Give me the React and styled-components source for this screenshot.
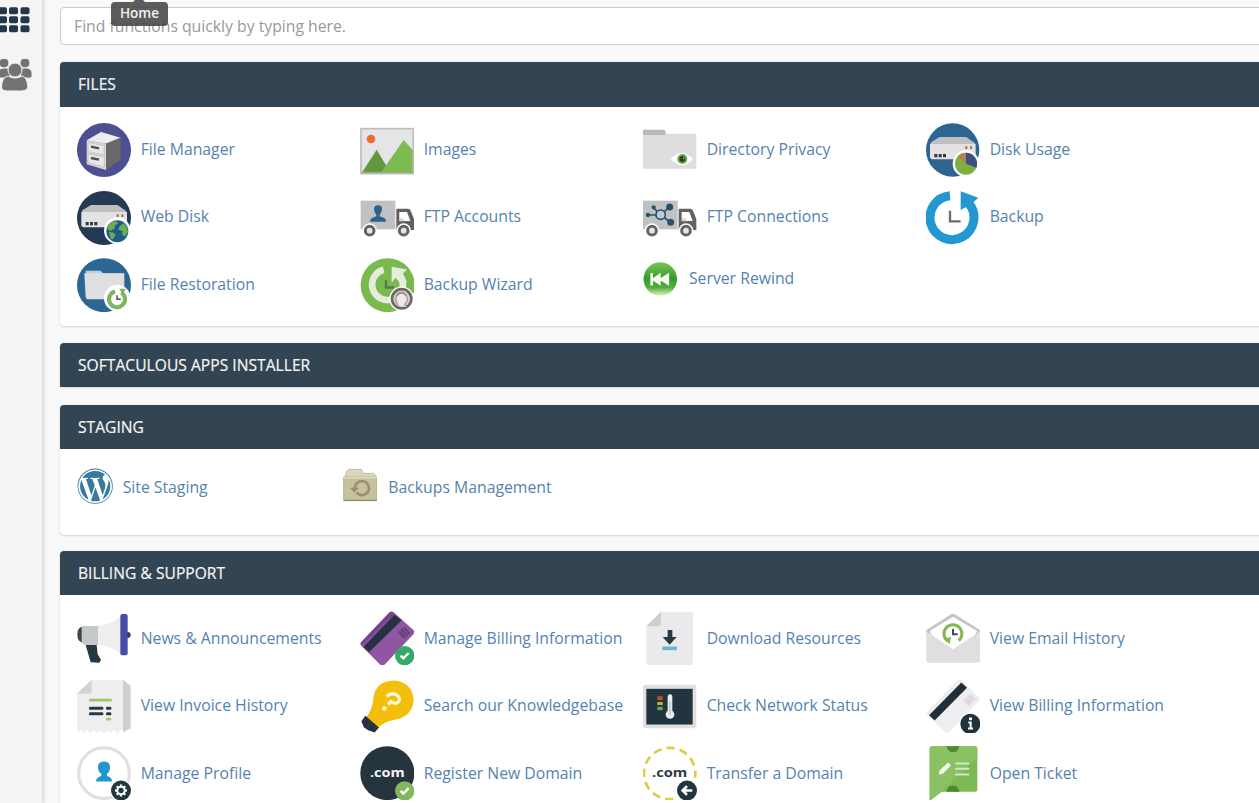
import React from "react";
import styled, { createGlobalStyle } from "styled-components";
import { FaWordpress } from "react-icons/fa";

const GlobalStyle = createGlobalStyle`
  * { box-sizing: border-box; }
  html, body { margin: 0; height: 100%; overflow: hidden; }
  body { background: #f9f9f9; font-family: "Open Sans", "Noto Sans", sans-serif; }
`;

const Page = styled.div`
  display: flex;
  width: 1259px;
  height: 803px;
  overflow: hidden;
`;

const Sidebar = styled.nav`
  flex: none;
  width: 42px;
  height: 803px;
  background: #f4f4f4;
  box-shadow: 1px 0 4px 1px #d4d4d4;
  display: flex;
  flex-direction: column;
  padding-top: 7px;
  gap: 26px;
`;

const NavIcon = styled.svg`
  display: block;
  width: 33px;
  height: ${(p) => p.$h}px;
`;

const Main = styled.main`
  flex: none;
  width: 1240px;
  padding: 7px 0 0 18px;
`;

const SearchWrap = styled.div`
  position: relative;
  height: 38px;
  margin-bottom: 17px;
`;

const SearchBox = styled.div`
  height: 38px;
  border: 1px solid #cbcbcb;
  border-radius: 4px;
  background: #fff;
  padding: 0 13px;
  font-size: 15.75px;
  line-height: 36px;
  color: #999;
`;

const Tooltip = styled.div`
  position: absolute;
  left: 51px;
  top: -5px;
  width: 57px;
  height: 24px;
  border-radius: 4px;
  background: rgba(70, 70, 70, 0.88);
  color: #f2f2f2;
  font-size: 13.5px;
  font-weight: 600;
  line-height: 23px;
  text-align: center;
  &::before {
    content: "";
    position: absolute;
    left: 22px;
    top: -6px;
    border: 6px solid transparent;
    border-top: 0;
    border-bottom-color: rgba(70, 70, 70, 0.88);
  }
`;

const Panel = styled.section`
  height: ${(p) => p.$h}px;
  margin-bottom: ${(p) => p.$gap}px;
  border-radius: 4px;
  background: #fff;
  box-shadow: 0 1px 2px #d5d5d5, 0 0 1px #ccc;
`;

const PanelTitle = styled.h2`
  margin: 0;
  height: ${(p) => p.$h || 44}px;
  border-radius: 4px 4px 0 0;
  background: #334453;
  color: #f3f5f6;
  font-size: 15.6px;
  font-weight: 400;
  line-height: 44px;
  padding-left: 18px;
  letter-spacing: 0.03px;
  -webkit-text-stroke: 0.2px #f3f5f6;
`;

const Grid = styled.div`
  display: grid;
  grid-template-columns: repeat(4, ${(p) => p.$col || 283}px);
  grid-auto-rows: 54px;
  row-gap: 13.5px;
  padding: ${(p) => p.$top || 16}px 0 0 16.67px;
`;

const Item = styled.a`
  display: flex;
  align-items: ${(p) => (p.$small ? "flex-start" : "center")};
  gap: ${(p) => p.$gap || 10}px;
  padding-top: ${(p) => (p.$small ? p.$drop || 0 : 0)}px;
  color: #5583b0;
`;

const Icon = styled.svg`
  flex: none;
  display: block;
  width: ${(p) => p.$s || 54}px;
  height: ${(p) => p.$s || 54}px;
`;

const Label = styled.span`
  font-size: 15.77px;
  line-height: 22px;
  white-space: nowrap;
  margin-top: ${(p) => p.$mt}px;
`;

const Server = ({ x = 0, y = 0 }) => (
  <g transform={`translate(${x} ${y})`}>
    <path d="M66 285L92 269H172L198 288V292H64Z" fill="#bdbfc0" />
    <path d="M63 290H200V328L195 336H68L63 331Z" fill="#e3e2e3" />
    <path d="M76 320h9v10h-9zM89 320h9v10h-9zM102 320h9v10h-9z" fill="#38343b" />
    <path d="M169 297h6v8h-6zM183 297h6v8h-6z" fill="#a56f4c" />
  </g>
);

const Truck = ({ x = 0, children }) => (
  <g transform={`translate(${x} 0)`}>
    <rect x="61" y="256" width="104" height="86" fill="#bfc1c3" />
    {children}
    <path d="M168 280H203Q209 280 211 286L221 311V344H168Z" fill="#646060" />
    <path d="M177 290H200L210 317H177Z" fill="#fff" />
    <path d="M178 309H188L193 318H178Z" fill="#d6d6d6" />
    <circle cx="88" cy="346" r="22" fill="#fff" />
    <circle cx="88" cy="346" r="13" fill="#e6e6e6" stroke="#666262" strokeWidth="9" />
    <circle cx="190" cy="346" r="22" fill="#fff" />
    <circle cx="190" cy="346" r="13" fill="#e6e6e6" stroke="#666262" strokeWidth="9" />
  </g>
);

const FileManager = () => (
  <Icon viewBox="50 24 162 162">
    <circle cx="131" cy="105" r="81" fill="#4e4e92" />
    <path d="M79 76L122 51L181 68L137 86Z" fill="#eeeded" />
    <path d="M79 76L137 86V165L79 148Z" fill="#d9d9da" />
    <path d="M137 86L181 68V134L137 165Z" fill="#696869" />
    <path d="M83 82L132 92V120L83 110ZM83 116L132 126V156L83 144Z" fill="#e8e7e7" stroke="#b6b6b8" strokeWidth="2" />
    <path d="M92 95L116 100M92 129L116 134" stroke="#514c56" strokeWidth="7" />
  </Icon>
);
const WebDisk = () => (
  <Icon viewBox="50 227 162 162">
    <circle cx="131" cy="308" r="81" fill="#253854" />
    <Server />
    <circle cx="171" cy="346" r="40" fill="#fff" />
    <circle cx="171" cy="348" r="33" fill="#205c86" />
    <path d="M140 334Q148 318 168 318L174 324L162 331L164 339L152 346L143 344ZM146 349L160 352L166 359L158 372L151 371ZM178 332L190 324Q202 336 203 349L194 364L184 356L187 348L174 343Z" fill="#6bad55" />
  </Icon>
);
const FileRestoration = () => (
  <Icon viewBox="50 429.5 162 162">
    <circle cx="131" cy="511" r="81" fill="#2c6793" />
    <path d="M76 468H121L129 476H190V490H76Z" fill="#bfd0dc" />
    <path d="M72 475H192V553H81Q77 553 76 546Z" fill="#dedfe1" />
    <circle cx="171" cy="550" r="40" fill="#fff" />
    <path d="M164 530A24 24 0 1 0 183 533" fill="none" stroke="#80b35d" strokeWidth="12" />
    <path d="M177 522L196 522L187 540Z" fill="#80b35d" />
    <path d="M170 541V553H181" fill="none" stroke="#645d60" strokeWidth="5" />
  </Icon>
);
const Images = () => (
  <Icon viewBox="59 24 162 162">
    <rect x="62" y="41" width="157" height="135" fill="#e3e5e7" stroke="#bfbcc0" strokeWidth="5" />
    <circle cx="92" cy="72" r="13" fill="#ee6d2d" />
    <path d="M66 171L109 104L149 171Z" fill="#63973f" />
    <path d="M123 171L190 75L217 105V172Z" fill="#7dbb52" />
    <path d="M64 172H219" stroke="#8eb577" strokeWidth="4" />
  </Icon>
);
const FtpAccounts = () => (
  <Icon viewBox="59 227 162 162">
    <Truck>
      <path d="M101 281Q101 270 113 270Q125 270 125 281Q125 292 118 299V303L132 308Q137 311 137 319H89Q89 311 95 308L108 303V299Q101 292 101 281Z" fill="#2c628b" />
    </Truck>
  </Icon>
);
const BackupWizard = () => (
  <Icon viewBox="59 429.5 162 162">
    <circle cx="142" cy="511" r="81" fill="#79b94e" />
    <path d="M130 465A46 46 0 1 0 182 488" fill="none" stroke="#e4eddd" strokeWidth="20" />
    <path d="M154 456L200 464L188 476L200 502L182 508L166 489L154 504Z" fill="#e4eddd" />
    <path d="M137 496V518H161" fill="none" stroke="#527951" strokeWidth="7" />
    <circle cx="184" cy="552" r="37" fill="#fff" />
    <circle cx="184" cy="552" r="29" fill="#d5cecf" stroke="#706664" strokeWidth="8" />
    <path d="M173 571Q162 555 169 540Q182 525 197 540Q207 557 192 568L199 577" fill="#eee8e8" stroke="#92817e" strokeWidth="3" />
    <path d="M169 543Q181 526 198 542" fill="none" stroke="#998e8c" strokeWidth="5" />
  </Icon>
);
const DirectoryPrivacy = () => (
  <Icon viewBox="38 24 162 162">
    <path d="M38 46Q38 44 41 44H101L106 49V62H38Z" fill="#b8b8b9" />
    <path d="M38 60H103L107 56H198V161H38Z" fill="#dedede" />
    <path d="M121 132Q154 98 188 132Q154 169 121 132Z" fill="#fff" />
    <circle cx="156" cy="132" r="15" fill="#70a94b" />
    <circle cx="156" cy="132" r="9" fill="#274122" />
    <circle cx="160" cy="130" r="3" fill="#85a478" />
  </Icon>
);
const FtpConnections = () => (
  <Icon viewBox="38 227 162 162">
    <Truck x={-23}>
      <g fill="#28516b" stroke="#28516b" strokeWidth="5">
        <path d="M115 299L92 277M115 299L77 299M115 299L139 275M115 299L143 321" />
        <circle cx="93" cy="276" r="4" />
        <circle cx="76" cy="299" r="4" />
        <circle cx="141" cy="275" r="8" />
        <circle cx="144" cy="321" r="8" />
        <circle cx="114" cy="298" r="14" fill="#bdced5" />
      </g>
    </Truck>
  </Icon>
);
const ServerRewind = () => (
  <Icon viewBox="39 443 103 103" $s={34.5}>
    <defs>
      <linearGradient id="rewind" x2="0" y2="1">
        <stop stopColor="#7ac557" />
        <stop offset=".48" stopColor="#359c2d" />
        <stop offset=".75" stopColor="#54ac3b" />
        <stop offset="1" stopColor="#e6f8be" />
      </linearGradient>
    </defs>
    <circle cx="90.5" cy="494" r="50" fill="url(#rewind)" />
    <path d="M61 476H69V491L92 475V491L117 475V514L92 499V514L69 499V513H61Z" fill="#f4faef" />
  </Icon>
);
const DiskUsage = () => (
  <Icon viewBox="47 24 162 162">
    <circle cx="127" cy="105" r="80" fill="#2d6590" />
    <Server x={-4} y={-203} />
    <circle cx="167" cy="146" r="40" fill="#fff" />
    <circle cx="167" cy="146" r="33" fill="#7eaf42" />
    <path d="M167 146V113A33 33 0 0 1 198 158Z" fill="#3f4e83" />
    <path d="M167 146V113A33 33 0 0 0 141 126Z" fill="#b0844c" />
  </Icon>
);
const Backup = () => (
  <Icon viewBox="47 227 162 162">
    <path d="M119 241A66 66 0 1 0 176 265" fill="none" stroke="#2297d1" strokeWidth="27" />
    <path d="M151 228L204 247L190 260L166 276L151 284Z" fill="#2297d1" />
    <path d="M119 286V318H151" fill="none" stroke="#706c6c" strokeWidth="7" />
  </Icon>
);

const WordPress = () => (
  <Icon as={FaWordpress} $s={36.4} color="#367b9e" />
);
const BackupsFolder = () => (
  <Icon viewBox="38 57 104 104" $s={34.7}>
    <path d="M44 83L50 65L57 61H93L98 73H130L136 80V92H44Z" fill="#dad7be" stroke="#ada98b" strokeWidth="2" />
    <path d="M40 84H140V155H40Z" fill="#c7c29d" stroke="#a29c7c" strokeWidth="2" />
    <path d="M41 86H139" stroke="#eeead1" strokeWidth="3" />
    <path d="M41 154H139" stroke="#8d886e" strokeWidth="4" />
    <path d="M74 119A21 21 0 1 1 79 131" fill="none" stroke="#999172" strokeWidth="8" />
    <path d="M58 116L86 116L72 131Z" fill="#999172" />
  </Icon>
);

const News = () => (
  <Icon viewBox="50 35 162 162">
    <path d="M76 137H109L112 165L122 181L117 190L91 189Z" fill="#263741" />
    <path d="M70 82Q51 81 51 105Q51 131 70 129Z" fill="#3d4548" />
    <path d="M64 80H116V137H74Q64 136 64 125Z" fill="#c7c8c9" />
    <path d="M113 79Q151 76 183 50V164Q151 138 113 136Z" fill="#eeeeef" />
    <circle cx="202" cy="107" r="9" fill="#32366d" />
    <rect x="180" y="44" width="22" height="124" rx="6" fill="#454da5" />
  </Icon>
);
const Invoice = () => (
  <Icon viewBox="50 237.5 162 162">
    <path d="M94 240H188V390H180L171 400L161 390L151 400L141 390L131 400L121 390L111 400L101 390L91 400L81 390L71 400L61 390L50 398V281Z" fill="#eeeeef" />
    <path d="M188 240L211 258V385L188 398Z" fill="#cfcfd2" />
    <path d="M94 240V282H50Z" fill="#d3d3d5" />
    <path d="M90 301H151M141 358H149" stroke="#9dc763" strokeWidth="8" strokeLinecap="round" />
    <path d="M90 325H125M90 342H125M141 325H149M141 342H149" stroke="#293a44" strokeWidth="9" strokeLinecap="round" />
  </Icon>
);
const Gear = ({ cx, cy }) => (
  <g transform={`translate(${cx} ${cy})`}>
    {[0, 45, 90, 135].map((r) => (
      <rect key={r} x="-3.5" y="-18" width="7" height="36" fill="#fff" transform={`rotate(${r})`} />
    ))}
    <circle r="11" fill="#253640" stroke="#fff" strokeWidth="6" />
  </g>
);
const Profile = () => (
  <Icon viewBox="50 440.5 162 162">
    <circle cx="131" cy="522" r="76" fill="#fff" stroke="#dfdfe0" strokeWidth="9" />
    <path d="M113 504Q113 487 131 487Q149 487 149 504Q149 517 140 524V530L150 535Q155 538 155 547H107Q107 538 113 535L123 530V524Q113 517 113 504Z" fill="#2496cf" />
    <circle cx="182" cy="574" r="33" fill="#fff" />
    <circle cx="182" cy="574" r="30" fill="#253640" />
    <Gear cx={182} cy={574} />
  </Icon>
);
const Check = ({ cx, cy, fill }) => (
  <g transform={`translate(${cx} ${cy})`}>
    <circle r="29" fill={fill} />
    <path d="M-12 0L-4 8L12 -8" fill="none" stroke="#fff" strokeWidth="7" />
  </g>
);
const Billing = () => (
  <Icon viewBox="44 35 162 162">
    <path d="M133 39Q139 34 145 39L205 93Q210 98 205 104L119 195Q112 202 105 196L48 139Q43 133 48 128Z" fill="#9055a3" />
    <path d="M147 46L169 63L71 159L54 143Z" fill="#263142" />
    <path d="M133 39Q139 34 147 43L50 138Q43 133 48 128Z" fill="#75438d" />
    <path d="M157 99L178 82L196 102L176 119Z" fill="#67407d" />
    <path d="M164 93L183 112M172 87L189 107" stroke="#8b5a9b" strokeWidth="3" />
    <Check cx={178} cy={169} fill="#35a967" />
  </Icon>
);
const Bulb = () => (
  <Icon viewBox="44 237.5 162 162">
    <path d="M84 293Q91 244 146 242Q199 246 205 299Q202 350 149 360Q122 363 96 385L63 352Q83 327 84 293Z" fill="#f3bf0c" />
    <path d="M60 348L101 383L88 398L70 392L56 383L48 365Z" fill="#293141" />
    <path d="M124 290Q140 275 156 287Q168 297 158 307Q150 314 137 305L128 314" fill="none" stroke="#fff8d8" strokeWidth="10" />
    <circle cx="117" cy="326" r="7" fill="#fff8d8" />
  </Icon>
);
const DotCom = styled.text`
  font-family: "Open Sans", sans-serif;
  font-size: 38px;
  font-weight: 700;
`;
const Register = () => (
  <Icon viewBox="44 440.5 162 162">
    <circle cx="126" cy="522" r="81" fill="#26343e" />
    <DotCom x="74" y="535" fill="#f4f6f6" textLength="104" lengthAdjust="spacingAndGlyphs">.com</DotCom>
    <Check cx={178} cy={575} fill="#83b65d" />
  </Icon>
);
const Download = () => (
  <Icon viewBox="38 35 162 162">
    <path d="M92 37H180Q188 37 188 45V190Q188 197 180 197H56Q48 197 48 190V81Z" fill="#eaeaec" />
    <path d="M92 37V72Q92 81 83 81H48Z" fill="#ceced2" />
    <path d="M112 92H126V113H139L118 136L97 113H112Z" fill="#263944" />
    <path d="M96 147H140" stroke="#65b7cf" strokeWidth="11" />
  </Icon>
);
const Network = () => (
  <Icon viewBox="38 237.5 162 162">
    <rect x="38" y="255" width="160" height="130" rx="8" fill="#dedfe1" />
    <rect x="48" y="267" width="139" height="107" fill="#213440" />
    <path d="M81 295H97" stroke="#b65432" strokeWidth="12" />
    <path d="M81 311H97" stroke="#d2ad35" strokeWidth="9" />
    <path d="M81 326H97" stroke="#5eaa5b" strokeWidth="10" />
    <path d="M119 290V346" stroke="#e9edef" strokeWidth="14" strokeLinecap="round" />
    <circle cx="119" cy="344" r="13" fill="#e9edef" />
    <path d="M119 306V344" stroke="#b9bcc0" strokeWidth="4" />
  </Icon>
);
const Transfer = () => (
  <Icon viewBox="38 440.5 162 162">
    <circle cx="118" cy="523" r="77" fill="none" stroke="#dcce3c" strokeWidth="8" strokeDasharray="25 15.3" strokeDashoffset="12" />
    <DotCom x="65" y="535" fill="#293945" textLength="106" lengthAdjust="spacingAndGlyphs">.com</DotCom>
    <circle cx="170" cy="574" r="34" fill="#fff" />
    <circle cx="170" cy="574" r="30" fill="#22343e" />
    <path d="M186 574H159M170 561L157 574L170 587" fill="none" stroke="#fff" strokeWidth="8" />
  </Icon>
);
const Email = () => (
  <Icon viewBox="47 35 162 162">
    <path d="M48 92L120 46Q128 40 136 46L209 92V110H48Z" fill="#c6c4c8" />
    <path d="M58 95L128 52L200 95L179 134L129 163L77 132Z" fill="#fff" />
    <path d="M48 96L128 150L209 96V184Q209 190 202 190H55Q48 190 48 184Z" fill="#dfdfe1" />
    <path d="M112 125A27 27 0 1 1 145 124" fill="none" stroke="#85b650" strokeWidth="9" />
    <path d="M99 118L122 113L118 134Z" fill="#85b650" />
    <path d="M128 89V105H142" fill="none" stroke="#3a4c60" strokeWidth="6" />
  </Icon>
);
const ViewBilling = () => (
  <Icon viewBox="47 237.5 162 162">
    <path d="M140 243Q148 237 155 243L205 292Q210 298 205 304L118 397Q111 403 104 397L52 345Q47 339 52 333Z" fill="#efedef" />
    <path d="M153 248L170 264L73 362L56 346Z" fill="#20303b" />
    <path d="M158 302L181 282L196 297L174 320Z" fill="#dfdcde" />
    <circle cx="180" cy="372" r="33" fill="#fff" />
    <circle cx="180" cy="372" r="30" fill="#22323d" />
    <rect x="176" y="353" width="9" height="8" fill="#fff" />
    <path d="M174 368H181V386M173 386H188" fill="none" stroke="#fff" strokeWidth="6" />
  </Icon>
);
const Ticket = () => (
  <Icon viewBox="47 440.5 162 162">
    <path d="M65 441H194Q201 441 201 449V571Q201 578 193 578H94L58 605V449Q58 441 65 441Z" fill="#7eb956" />
    <path d="M65 441H194Q201 441 201 449V472L94 578L58 605V449Q58 441 65 441Z" fill="#8ac263" />
    <path d="M109 441H147Q144 459 128 459Q112 459 109 441ZM108 578Q112 559 128 559Q144 559 147 578Z" fill="#508739" />
    <path d="M85 527L88 514L113 490L122 499L98 523Z" fill="#f3f8ed" />
    <path d="M137 493H174M137 509H174M137 526H174" stroke="#d4eac6" strokeWidth="6" strokeLinecap="round" />
  </Icon>
);

const files = [
  ["File Manager", FileManager],
  ["Images", Images],
  ["Directory Privacy", DirectoryPrivacy],
  ["Disk Usage", DiskUsage],
  ["Web Disk", WebDisk],
  ["FTP Accounts", FtpAccounts],
  ["FTP Connections", FtpConnections],
  ["Backup", Backup],
  ["File Restoration", FileRestoration],
  ["Backup Wizard", BackupWizard],
  ["Server Rewind", ServerRewind, 11.8],
];
const staging = [
  ["Site Staging", WordPress, 9.6],
  ["Backups Management", BackupsFolder, 11],
];
const billing = [
  ["News & Announcements", News],
  ["Manage Billing Information", Billing],
  ["Download Resources", Download],
  ["View Email History", Email],
  ["View Invoice History", Invoice],
  ["Search our Knowledgebase", Bulb],
  ["Check Network Status", Network],
  ["View Billing Information", ViewBilling],
  ["Manage Profile", Profile],
  ["Register New Domain", Register],
  ["Transfer a Domain", Transfer],
  ["Open Ticket", Ticket],
];

const Items = ({ list, drop, smallTop, labelTop }) =>
  list.map(([name, Glyph, gap]) => (
    <Item key={name} $small={Boolean(gap)} $gap={gap} $drop={drop}>
      <Glyph />
      <Label $mt={gap ? smallTop : labelTop}>{name}</Label>
    </Item>
  ));

export default function App() {
  return (
    <>
      <GlobalStyle />
      <Page>
        <Sidebar>
          <NavIcon $h={26} viewBox="0 0 33 26">
            <g fill="#24364a">
              {[0, 9, 18].map((y) =>
                [-2, 9, 20.5].map((x) => (
                  <rect key={`${x}-${y}`} x={x} y={y + 0.3} width="9" height="7" rx="1.8" />
                ))
              )}
            </g>
          </NavIcon>
          <NavIcon $h={33} viewBox="0 0 33 33">
            <g fill="#737373" stroke="#f4f4f4" strokeWidth="1">
              <circle cx="4" cy="4" r="5" />
              <circle cx="25" cy="4" r="5" />
              <path d="M-2 19V13Q-1 9 3 9H8L11 19ZM20 19L22 9H27Q31 9 32 13V18Q30 20 27 19Z" />
              <circle cx="15" cy="11" r="7" />
              <path d="M1.500 28Q2 18 8 17Q15 21 22 17Q27 18 28 28Q27 32 22 32H7Q2 32 1.500 28Z" />
            </g>
          </NavIcon>
        </Sidebar>
        <Main>
          <SearchWrap>
            <SearchBox>Find functions quickly by typing here.</SearchBox>
            <Tooltip>Home</Tooltip>
          </SearchWrap>
          <Panel $h={264} $gap={17}>
            <PanelTitle $h={45}>FILES</PanelTitle>
            <Grid>
              <Items list={files} drop={4} smallTop={5} labelTop={-2.4} />
            </Grid>
          </Panel>
          <Panel $h={44} $gap={18}>
            <PanelTitle>SOFTACULOUS APPS INSTALLER</PanelTitle>
          </Panel>
          <Panel $h={130} $gap={16}>
            <PanelTitle>STAGING</PanelTitle>
            <Grid $col={266} $top={19}>
              <Items list={staging} smallTop={8} />
            </Grid>
          </Panel>
          <Panel $h={260} $gap={0}>
            <PanelTitle>BILLING &amp; SUPPORT</PanelTitle>
            <Grid>
              <Items list={billing} labelTop={-1} />
            </Grid>
          </Panel>
        </Main>
      </Page>
    </>
  );
}
